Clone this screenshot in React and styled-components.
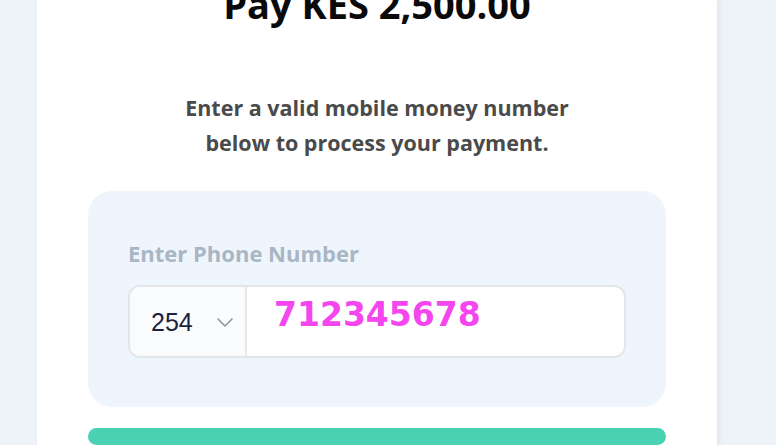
import styled, { createGlobalStyle } from 'styled-components'

const GlobalStyle = createGlobalStyle`
  body {
    margin: 0;
    background: #eef3f9;
    font-family: 'Open Sans', 'Noto Sans', sans-serif;
    overflow: hidden;
  }
`

function ChevronDown() {
  return (
    <svg width="20" height="20" viewBox="0 0 20 20" fill="none" stroke="#8f949b" strokeWidth="1.6" strokeLinecap="round" strokeLinejoin="round">
      <path d="M3 7l7 7 7-7" />
    </svg>
  )
}

export default function App() {
  return (
    <Page>
      <GlobalStyle />
      <Card>
        <Title>Pay KES 2,500.00</Title>
        <Subtitle>
          Enter a valid mobile money number
          <br />
          below to process your payment.
        </Subtitle>
        <Panel>
          <Label>Enter Phone Number</Label>
          <InputGroup>
            <CodeSelect>
              <span>254</span>
              <ChevronDown />
            </CodeSelect>
            <PhoneInput>712345678</PhoneInput>
          </InputGroup>
        </Panel>
        <PayButton />
      </Card>
    </Page>
  )
}

const Page = styled.div`
  height: 445px;
  padding-left: 37px;
`

const Card = styled.div`
  width: 680px;
  height: 445px;
  background: #ffffff;
  box-shadow: 2px 0 6px rgba(40, 60, 90, 0.08);
  padding: 0 51px;
  box-sizing: border-box;
  display: flex;
  flex-direction: column;
`

const Title = styled.h1`
  margin: -18px 0 0;
  font-size: 38px;
  line-height: 44px;
  font-weight: 700;
  color: #0a0a0a;
  text-align: center;
`

const Subtitle = styled.p`
  margin: 64px 0 0;
  font-size: 21.5px;
  line-height: 35px;
  font-weight: 700;
  color: #4a4a4a;
  text-align: center;
`

const Panel = styled.div`
  margin-top: 31px;
  background: #eff5fc;
  border-radius: 24px;
  padding: 47px 40px 49px;
  display: flex;
  flex-direction: column;
`

const Label = styled.div`
  font-size: 22px;
  line-height: 30px;
  font-weight: 700;
  color: #a9b6c4;
  margin-bottom: 17px;
`

const InputGroup = styled.div`
  display: flex;
  height: 73px;
  border: 2px solid #e2e5e9;
  border-radius: 12px;
  overflow: hidden;
  box-sizing: border-box;
  background: #ffffff;
`

const CodeSelect = styled.div`
  width: 117px;
  display: flex;
  align-items: center;
  justify-content: space-between;
  padding: 0 10px 0 21px;
  box-sizing: border-box;
  background: #fafbfc;
  border-right: 2px solid #e6e8eb;
  font-family: 'Liberation Sans', Arial, sans-serif;
  font-size: 25px;
  color: #1a2340;
  span {
    padding-top: 2px;
  }
`

const PhoneInput = styled.div`
  flex: 1;
  padding: 2px 0 0 27px;
  font-family: 'DejaVu Sans', Verdana, sans-serif;
  font-weight: 700;
  font-size: 33px;
  line-height: 52px;
  color: #f545ef;
`

const PayButton = styled.div`
  margin-top: 21px;
  height: 60px;
  background: #4ad1b1;
  border-radius: 16px;
`
